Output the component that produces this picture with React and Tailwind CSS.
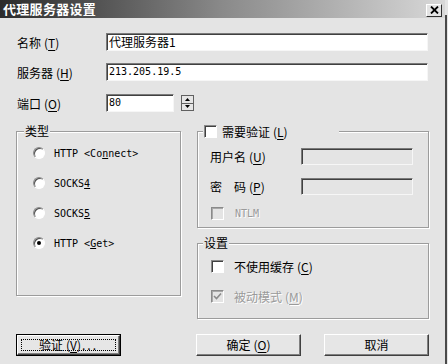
import React from "react";

const CJK = "font-['Noto_Sans_CJK_SC','Noto_Sans',sans-serif]";
const MONO = "font-['DejaVu_Sans_Mono',monospace]";
const DMONO = "font-['DejaVu_Sans_Mono','Noto_Sans_CJK_SC',monospace]";

function Acc({ text, k, gray }) {
  return (
    <span className={`${CJK} text-[12px] leading-[16px] whitespace-nowrap ${gray ? "text-[#9a9a9a] [text-shadow:1px_1px_0_#ffffff]" : "text-black"}`}>
      {text}
      <span className="ml-[3px]">(</span>
      <span className="underline underline-offset-2">{k}</span>
      <span>)</span>
    </span>
  );
}

function Sunken({ className = "", disabled, children }) {
  return (
    <div
      className={`border border-t-[#7a7a7a] border-l-[#7a7a7a] border-b-[#f6f6f6] border-r-[#f6f6f6] shadow-[inset_1px_1px_0_#404040] ${disabled ? "bg-[#e4e4e4]" : "bg-white"} flex items-center pl-[2px] ${className}`}
    >
      {children}
    </div>
  );
}

function Check({ checked, disabled }) {
  return (
    <div
      className={`w-[13px] h-[13px] shrink-0 border border-t-[#8a8a8a] border-l-[#8a8a8a] border-b-white border-r-white ${disabled ? "bg-[#e4e4e4] shadow-[inset_1px_1px_0_#a8a8a8]" : "bg-white shadow-[inset_1px_1px_0_#404040]"} flex items-center justify-center`}
    >
      {checked && (
        <svg width="9" height="9" viewBox="0 0 9 9">
          <path d="M1 4 L3.5 6.5 L8 1.5" stroke={disabled ? "#8a8a8a" : "#000"} strokeWidth="1.6" fill="none" />
        </svg>
      )}
    </div>
  );
}

function Radio({ checked }) {
  return (
    <div className="w-[12px] h-[12px] shrink-0 rounded-full border border-t-[#8a8a8a] border-l-[#8a8a8a] border-b-white border-r-white bg-white shadow-[inset_1px_1px_0_#505050] flex items-center justify-center">
      {checked && <div className="w-[4px] h-[4px] rounded-full bg-black" />}
    </div>
  );
}

function Group({ legend, legendClass = "", className = "", children }) {
  return (
    <div className={`border border-[#9c9c9c] shadow-[inset_1px_1px_0_#ffffff,1px_1px_0_#ffffff] flex flex-col ${className}`}>
      <div className={`-mt-[9px] h-[16px] bg-[#e4e4e4] px-[1px] flex items-center ${legendClass}`}>{legend}</div>
      {children}
    </div>
  );
}

function Btn({ children, isDefault, className = "" }) {
  const inner = (
    <div className="w-full h-full border border-t-white border-l-white border-b-[#404040] border-r-[#404040] shadow-[inset_-1px_-1px_0_#808080] bg-[#e6e6e6] flex items-center justify-center">
      {isDefault ? (
        <div className="w-[calc(100%-6px)] h-[calc(100%-6px)] border border-dotted border-black flex items-center justify-center">
          {children}
        </div>
      ) : (
        children
      )}
    </div>
  );
  return (
    <div className={`h-[22px] w-[105px] ${isDefault ? "border border-black" : ""} ${className}`}>{inner}</div>
  );
}

export default function App() {
  return (
    <div className="w-[448px] h-[364px] bg-[#e4e4e4] flex overflow-hidden">
      <div className="w-[445px] flex flex-col">
        {/* Title bar */}
        <div className="h-[18px] bg-linear-to-r from-[#2c2c2c] via-[#8a8a8a] to-[#d8d8d8] flex items-center justify-between pl-[3px] pr-[3px]">
          <span className={`${CJK} text-[13px] font-bold text-white leading-[18px] tracking-[0.3px]`}>代理服务器设置</span>
          <div className="w-[16px] h-[13px] mt-[2px] bg-[#e4e4e4] border border-t-white border-l-white border-b-[#303030] border-r-[#303030] flex items-center justify-center">
            <svg width="9" height="8" viewBox="0 0 9 8">
              <path d="M1 0.5 L8 7.5 M8 0.5 L1 7.5" stroke="#000" strokeWidth="1.8" />
            </svg>
          </div>
        </div>

        {/* Body */}
        <div className="flex flex-col pl-[16px] pt-[15px]">
          <div className="flex items-center h-[18px]">
            <div className="w-[90px] pl-[1px]"><Acc text="名称" k="T" /></div>
            <Sunken className="w-[322px] h-[18px]">
              <span className={`${CJK} text-[12px] leading-[14px]`}>代理服务器1</span>
            </Sunken>
          </div>
          <div className="flex items-center h-[18px] mt-[12px]">
            <div className="w-[90px] pl-[1px]"><Acc text="服务器" k="H" /></div>
            <Sunken className="w-[322px] h-[18px]">
              <span className={`${DMONO} text-[10px] leading-[14px]`}>213.205.19.5</span>
            </Sunken>
          </div>
          <div className="flex items-center h-[18px] mt-[13px]">
            <div className="w-[90px] pl-[1px]"><Acc text="端口" k="O" /></div>
            <Sunken className="w-[68px] h-[18px]">
              <span className={`${DMONO} text-[10px] leading-[14px]`}>80</span>
            </Sunken>
            <div className="ml-[7px] w-[13px] h-[16px] flex flex-col border border-[#606060]">
              <div className="flex-1 bg-[#e6e6e6] border-b border-[#606060] flex items-center justify-center">
                <svg width="5" height="3" viewBox="0 0 5 3"><path d="M2.5 0 L5 3 L0 3 Z" fill="#000" /></svg>
              </div>
              <div className="flex-1 bg-[#e6e6e6] flex items-center justify-center">
                <svg width="5" height="3" viewBox="0 0 5 3"><path d="M0 0 L5 0 L2.5 3 Z" fill="#000" /></svg>
              </div>
            </div>
          </div>

          {/* Groups */}
          <div className="flex mt-[19px]">
            <Group
              className="w-[165px] h-[165px]"
              legendClass="ml-[7px] w-fit"
              legend={<span className={`${CJK} text-[12px] leading-[16px]`}>类型</span>}
            >
              <div className="flex flex-col -mt-[1px] pl-[16px]">
                {[
                  { label: <>HTTP &lt;Co<span className="underline">n</span>nect&gt;</> },
                  { label: <>SOCKS<span className="underline">4</span></> },
                  { label: <>SOCKS<span className="underline">5</span></> },
                  { label: <>HTTP &lt;<span className="underline">G</span>et&gt;</>, checked: true },
                ].map((r, i) => (
                  <div key={i} className="h-[30px] flex items-center">
                    <Radio checked={r.checked} />
                    <span className={`${MONO} ml-[9px] text-[10px] text-black`}>{r.label}</span>
                  </div>
                ))}
              </div>
            </Group>

            <div className="ml-[16px] flex flex-col">
              <Group
                className="w-[232px] h-[97px]"
                legendClass="ml-[5px] w-[136px]"
                legend={
                  <div className="flex items-center">
                    <Check />
                    <span className="ml-[5px]"><Acc text="需要验证" k="L" /></span>
                  </div>
                }
              >
                <div className="flex flex-col mt-[2px] pl-[12px]">
                  <div className="h-[30px] flex items-center">
                    <div className="w-[91px]"><Acc text="用户名" k="U" /></div>
                    <Sunken disabled className="w-[112px] h-[17px]" />
                  </div>
                  <div className="h-[30px] flex items-center">
                    <div className="w-[91px]">
                      <Acc text={"密\u3000码"} k="P" />
                    </div>
                    <Sunken disabled className="w-[112px] h-[17px]" />
                  </div>
                  <div className="h-[24px] flex items-center pl-[1px]">
                    <Check disabled />
                    <span className={`${MONO} ml-[11px] text-[10px] text-[#9a9a9a] [text-shadow:1px_1px_0_#ffffff]`}>NTLM</span>
                  </div>
                </div>
              </Group>

              <Group
                className="w-[232px] h-[76px] mt-[15px]"
                legendClass="ml-[5px] w-fit"
                legend={<span className={`${CJK} text-[12px] leading-[16px]`}>设置</span>}
              >
                <div className="flex flex-col pl-[13px]">
                  <div className="h-[30px] flex items-center">
                    <Check />
                    <span className="ml-[10px]"><Acc text="不使用缓存" k="C" /></span>
                  </div>
                  <div className="h-[30px] flex items-center">
                    <Check checked disabled />
                    <span className="ml-[10px]"><Acc text="被动模式" k="M" gray /></span>
                  </div>
                </div>
              </Group>
            </div>
          </div>

          {/* Buttons */}
          <div className="flex mt-[15px]">
            <Btn isDefault>
              <Acc text="验证" k="V" />
              <span className={`${CJK} text-[12px] leading-[16px] tracking-[2px] ml-[1px]`}>...</span>
            </Btn>
            <Btn className="ml-[75px]"><Acc text="确定" k="O" /></Btn>
            <Btn className="ml-[23px]">
              <span className={`${CJK} text-[12px] leading-[16px]`}>取消</span>
            </Btn>
          </div>
        </div>
      </div>
      <div className="w-[3px] flex flex-col">
        <div className="mt-[15px] w-[2px] flex-1 bg-[#4a4a4a]" />
      </div>
    </div>
  );
}
